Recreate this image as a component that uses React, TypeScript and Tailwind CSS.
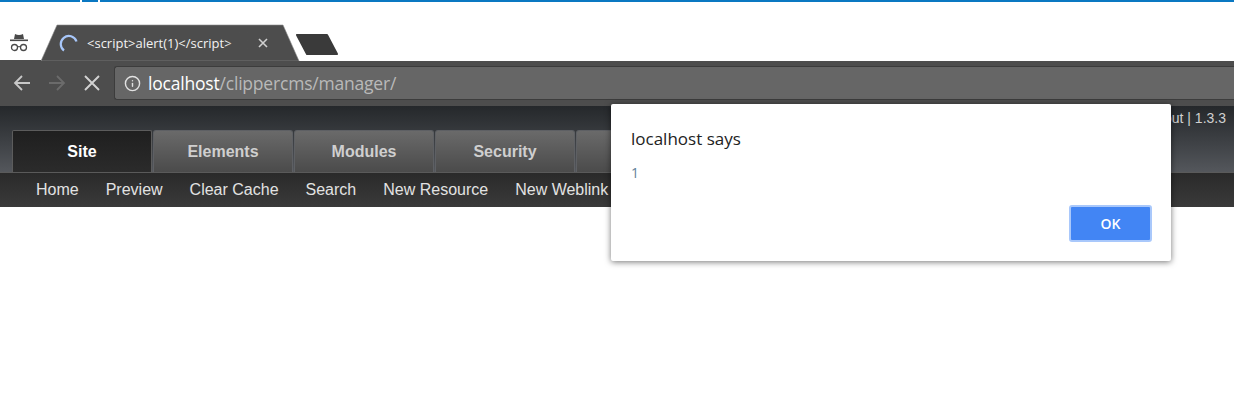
import { Info } from "lucide-react";

const sans = "font-['Liberation_Sans',Arial,sans-serif]";
const ui = "font-['Open_Sans','Noto_Sans',sans-serif]";

function TopTab({ label, active }: { label: string; active?: boolean }) {
  return (
    <div
      className={
        active
          ? "flex h-[42px] w-[140px] items-center justify-center rounded-t-[2px] border border-b-0 border-[#5c5c5c] bg-gradient-to-b from-[#1f1f1f] to-[#2b2b2b] text-[16px] font-bold text-white"
          : "flex h-[42px] w-[140px] items-center justify-center rounded-t-[3px] border border-b-0 border-[#5e6064] bg-gradient-to-b from-[#6a6a6a] to-[#4b4b4b] text-[16px] font-bold text-[#cfcfcf]"
      }
    >
      {label}
    </div>
  );
}

export default function App() {
  const nav = ["Home", "Preview", "Clear Cache", "Search", "New Resource", "New Weblink"];
  return (
    <div className="relative h-[401px] w-[1234px] overflow-hidden bg-white">
      {/* top strip */}
      <div className="flex h-[2px] w-full">
        <div className="w-[80px] bg-[#0a78c2]" />
        <div className="w-[2px] bg-white" />
        <div className="w-[16px] bg-[#0a78c2]" />
        <div className="w-[2px] bg-white" />
        <div className="flex-1 bg-[#0a78c2]" />
      </div>

      {/* tab strip */}
      <div className="relative flex h-[59px] items-start">
        <svg className="absolute left-0 top-0" width="360" height="59" viewBox="0 0 360 59">
          <path d="M41 59 L57 23 H283 L299 59 Z" fill="#4d4d4d" stroke="#8a8a8a" strokeWidth="0.6" />
          <path d="M297 33 H327 L337 52 H307 Z" fill="#3a3a3a" stroke="#3a3a3a" strokeWidth="2" strokeLinejoin="round" />
          <path d="M0 59 H41" stroke="#4d4d4d" strokeWidth="2" />
        </svg>
        <div className="relative ml-[9px] mt-[29px] h-[24px] w-[21px]">
          <svg width="21" height="24" viewBox="0 0 21 24">
            <path d="M5 8 L6 3 Q8 4 10 4 Q12 4 14 3 L15 8 Z" fill="#4a4a4a" />
            <rect x="1" y="8.5" width="18" height="1.6" fill="#4a4a4a" />
            <circle cx="5.5" cy="16.5" r="3" fill="none" stroke="#4a4a4a" strokeWidth="1.3" />
            <circle cx="14.5" cy="16.5" r="3" fill="none" stroke="#4a4a4a" strokeWidth="1.3" />
            <path d="M8.5 16 Q10 15 11.5 16" fill="none" stroke="#4a4a4a" strokeWidth="1.2" />
          </svg>
        </div>
        <div className="relative ml-[29px] mt-[32px] h-[18px] w-[20px]">
          <svg width="20" height="20" viewBox="0 0 20 20">
            <path d="M17.5 7.5 A8 8 0 0 0 4.8 3.8 A8 8 0 0 0 5 16.5" fill="none" stroke="#a8c7fa" strokeWidth="2.2" />
          </svg>
        </div>
        <div className={`relative ml-[8px] mt-[30px] w-[163px] overflow-hidden whitespace-nowrap text-[13px] leading-[22px] text-[#f2f2f2] ${ui}`}>
          &lt;script&gt;alert(1)&lt;/script&gt;
          <div className="absolute right-0 top-0 h-full w-[24px] bg-gradient-to-r from-transparent to-[#4d4d4d]" />
        </div>
        <svg className="relative ml-[8px] mt-[36px]" width="10" height="10" viewBox="0 0 10 10">
          <path d="M1 1 L9 9 M9 1 L1 9" stroke="#d0d0d0" strokeWidth="1.6" />
        </svg>
      </div>

      {/* browser toolbar */}
      <div className="flex h-[45px] items-center bg-[#4d4d4d] pb-[1px]">
        <svg className="ml-[12px]" width="20" height="20" viewBox="0 0 20 20">
          <path d="M18 10 H3 M10 3 L3 10 L10 17" fill="none" stroke="#c8c8c8" strokeWidth="1.8" />
        </svg>
        <svg className="ml-[15px]" width="20" height="20" viewBox="0 0 20 20">
          <path d="M2 10 H17 M10 3 L17 10 L10 17" fill="none" stroke="#6b6b6b" strokeWidth="1.8" />
        </svg>
        <svg className="ml-[15px]" width="20" height="20" viewBox="0 0 20 20">
          <path d="M3 3 L17 17 M17 3 L3 17" fill="none" stroke="#d2d2d2" strokeWidth="1.9" />
        </svg>
        <div className={`ml-[12px] flex h-[34px] flex-1 items-center rounded-l-[3px] border border-r-0 border-[#3c3c3c] bg-[#666666] pl-[9px] text-[17.5px] tracking-[-0.2px] ${ui}`}>
          <Info size={17} strokeWidth={2} className="text-[#e2e2e2]" />
          <span className="ml-[7px] text-white">localhost</span>
          <span className="text-[#b9b9b9]">/clippercms/manager/</span>
        </div>
      </div>

      {/* page header */}
      <div className={sans}>
        <div className="relative h-[66px] bg-gradient-to-b from-[#25282b] to-[#54575c]">
          <div className="absolute right-[8px] top-[3px] text-[14px] leading-[18px] text-[#d0d0d0]">Logout | 1.3.3</div>
          <div className="flex h-full items-end gap-[1px] pl-[12px]">
            <TopTab label="Site" active />
            <TopTab label="Elements" />
            <TopTab label="Modules" />
            <TopTab label="Security" />
            <TopTab label="Tools" />
          </div>
        </div>
        <div className="flex h-[35px] items-center gap-[27px] border-t border-[#5a5a5a] bg-gradient-to-b from-[#2a2a2a] to-[#3a3a3a] pl-[36px] text-[16px] text-[#e2e2e2]">
          {nav.map((n) => (
            <span key={n}>{n}</span>
          ))}
        </div>
      </div>

      {/* alert dialog */}
      <div className={`absolute left-[611px] top-[104px] h-[157px] w-[560px] rounded-[2px] bg-white pl-[20px] shadow-[0_1px_6px_rgba(0,0,0,0.55)] ${ui}`}>
        <div className="mt-[23px] pt-[23px] text-[17px] leading-[24px] text-[#222222]" style={{ marginTop: 0 }}>
          localhost says
        </div>
        <div className="mt-[12px] text-[14px] leading-[20px] text-[#5f7f99]">1</div>
        <div className="absolute right-[19px] top-[101px] flex h-[37px] w-[83px] items-center justify-center rounded-[3px] border-2 border-[#a9c8fb] bg-[#4285f4] text-[14px] font-semibold text-white">
          OK
        </div>
      </div>
    </div>
  );
}
